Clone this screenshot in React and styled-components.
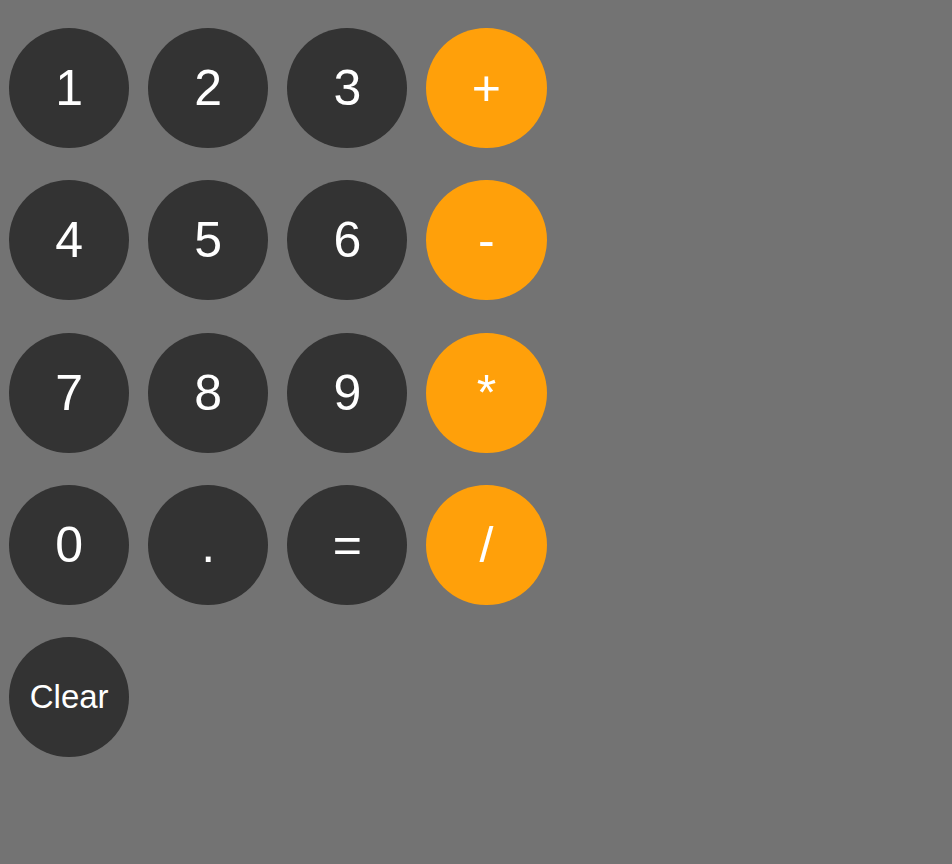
import styled, {createGlobalStyle} from 'styled-components'

const GlobalStyle = createGlobalStyle`
  html, body {
    margin: 0;
    background-color: #737373;
  }
  body {
    font-family: "Liberation Sans", Arial, sans-serif;
    min-height: 864px;
  }
`

const Keypad = styled.div`
  display: grid;
  grid-template-columns: repeat(4, 120.3px);
  column-gap: 18.8px;
  row-gap: 32.3px;
  padding: 28px 0 0 9px;
`

const Key = styled.button`
  width: 100%;
  height: 120px;
  border: none;
  border-radius: 50%;
  padding: 0;
  background-color: ${(props) => (props.$operator ? '#ffa00a' : '#333333')};
  color: #ffffff;
  font-family: "Liberation Sans", Arial, sans-serif;
  font-size: ${(props) => (props.$small ? '33px' : '50px')};
  cursor: pointer;
  display: flex;
  align-items: center;
  justify-content: center;
`

const keys = [
  ['1', false], ['2', false], ['3', false], ['+', true],
  ['4', false], ['5', false], ['6', false], ['-', true],
  ['7', false], ['8', false], ['9', false], ['*', true],
  ['0', false], ['.', false], ['=', false], ['/', true],
]

const App = () => {
  return (
    <>
      <GlobalStyle />
      <Keypad>
        {keys.map(([label, op]) => (
          <Key key={label} $operator={op}>
            {label}
          </Key>
        ))}
        <Key $small>Clear</Key>
      </Keypad>
    </>
  )
}
export default App
